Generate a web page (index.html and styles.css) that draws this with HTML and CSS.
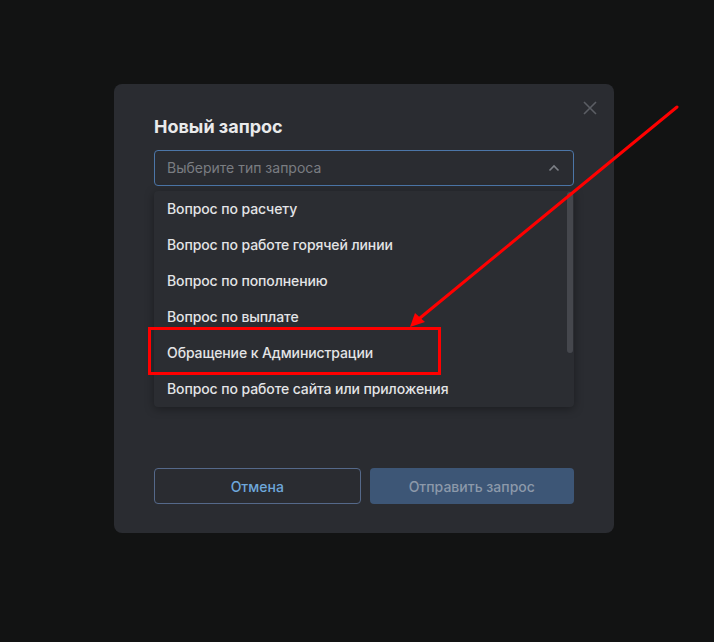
FILE: index.html
```html
<!DOCTYPE html>
<html lang="ru">
<head>
<meta charset="utf-8">
<link rel="stylesheet" href="styles.css">
</head>
<body>
<div class="stage">
  <div class="modal">
    <button class="close" aria-label="Закрыть">
      <svg width="14" height="14" viewBox="0 0 14 14"><path d="M1 1L13 13M13 1L1 13" stroke="#5b5e64" stroke-width="1.6" fill="none"/></svg>
    </button>
    <h2 class="title">Новый запрос</h2>
    <div class="select-wrap">
      <div class="select">
        <span class="placeholder">Выберите тип запроса</span>
        <svg class="chev" width="12" height="8" viewBox="0 0 12 8"><path d="M1.5 6.5L6 2L10.5 6.5" stroke="#7d8086" stroke-width="1.6" fill="none"/></svg>
      </div>
      <div class="menu">
        <div class="item">Вопрос по расчету</div>
        <div class="item">Вопрос по работе горячей линии</div>
        <div class="item">Вопрос по пополнению</div>
        <div class="item">Вопрос по выплате</div>
        <div class="item">Обращение к Администрации</div>
        <div class="item">Вопрос по работе сайта или приложения</div>
        <div class="scroll"></div>
      </div>
    </div>
    <div class="actions">
      <button class="btn cancel">Отмена</button>
      <button class="btn submit">Отправить запрос</button>
    </div>
  </div>
  <svg class="annot" width="714" height="642" viewBox="0 0 714 642">
    <line x1="677" y1="107" x2="420" y2="318" stroke="#ff0000" stroke-width="3" stroke-linecap="round"/>
    <polygon points="410,327 415,313 425,322" fill="#ff0000"/>
    <rect x="149.5" y="328.5" width="290" height="45" fill="none" stroke="#ff0000" stroke-width="3"/>
  </svg>
</div>
</body>
</html>
```

FILE: styles.css
```css
html, body {
  margin: 0;
  padding: 0;
  background: #121313;
}
body {
  font-family: Inter, "Noto Sans", sans-serif;
  width: 714px;
  height: 642px;
  overflow: hidden;
}
.stage {
  position: relative;
  width: 714px;
  height: 642px;
  padding: 84px 0 0 114px;
  box-sizing: border-box;
}
.modal {
  position: relative;
  width: 500px;
  height: 449px;
  box-sizing: border-box;
  background: #2a2c31;
  border-radius: 8px;
  padding: 30px 40px 30px 40px;
}
.close {
  position: absolute;
  top: 17px;
  right: 17px;
  width: 14px;
  height: 14px;
  padding: 0;
  border: 0;
  background: none;
  display: flex;
}
.title {
  margin: 0;
  font-size: 18px;
  line-height: 26px;
  font-weight: 700;
  color: #e9eaeb;
  height: 36px;
}
.select-wrap {
  position: relative;
}
.select {
  height: 36px;
  box-sizing: border-box;
  border: 1px solid #4c76a8;
  border-radius: 4px;
  display: flex;
  align-items: center;
  justify-content: space-between;
  padding: 0 13px 1px 12px;
}
.placeholder {
  font-size: 14px;
  color: #7a7d82;
}
.chev {
  display: block;
}
.menu {
  position: absolute;
  left: 0;
  right: 0;
  top: 41px;
  background: #2b2d32;
  border-radius: 4px;
  box-shadow: 0 2px 10px rgba(0,0,0,0.35);
  z-index: 2;
}
.item {
  height: 36px;
  box-sizing: border-box;
  display: flex;
  align-items: center;
  padding: 0 0 2px 13px;
  font-size: 14px;
  font-weight: 500;
  letter-spacing: -0.1px;
  color: #e3e4e6;
}
.scroll {
  position: absolute;
  right: 1px;
  top: 1px;
  width: 6px;
  height: 161px;
  border-radius: 3px;
  background: #45474d;
}
.actions {
  margin-top: 282px;
  display: flex;
  gap: 9px;
}
.btn {
  flex: 1;
  height: 36px;
  box-sizing: border-box;
  border-radius: 4px;
  font-family: Inter, "Noto Sans", sans-serif;
  font-size: 14px;
  font-weight: 500;
}
.cancel {
  background: transparent;
  border: 1px solid #55698a;
  color: #6ea7db;
}
.submit {
  background: #3d5676;
  border: 0;
  color: #8c99aa;
}
.annot {
  position: absolute;
  left: 0;
  top: 0;
  z-index: 5;
  pointer-events: none;
}
```
